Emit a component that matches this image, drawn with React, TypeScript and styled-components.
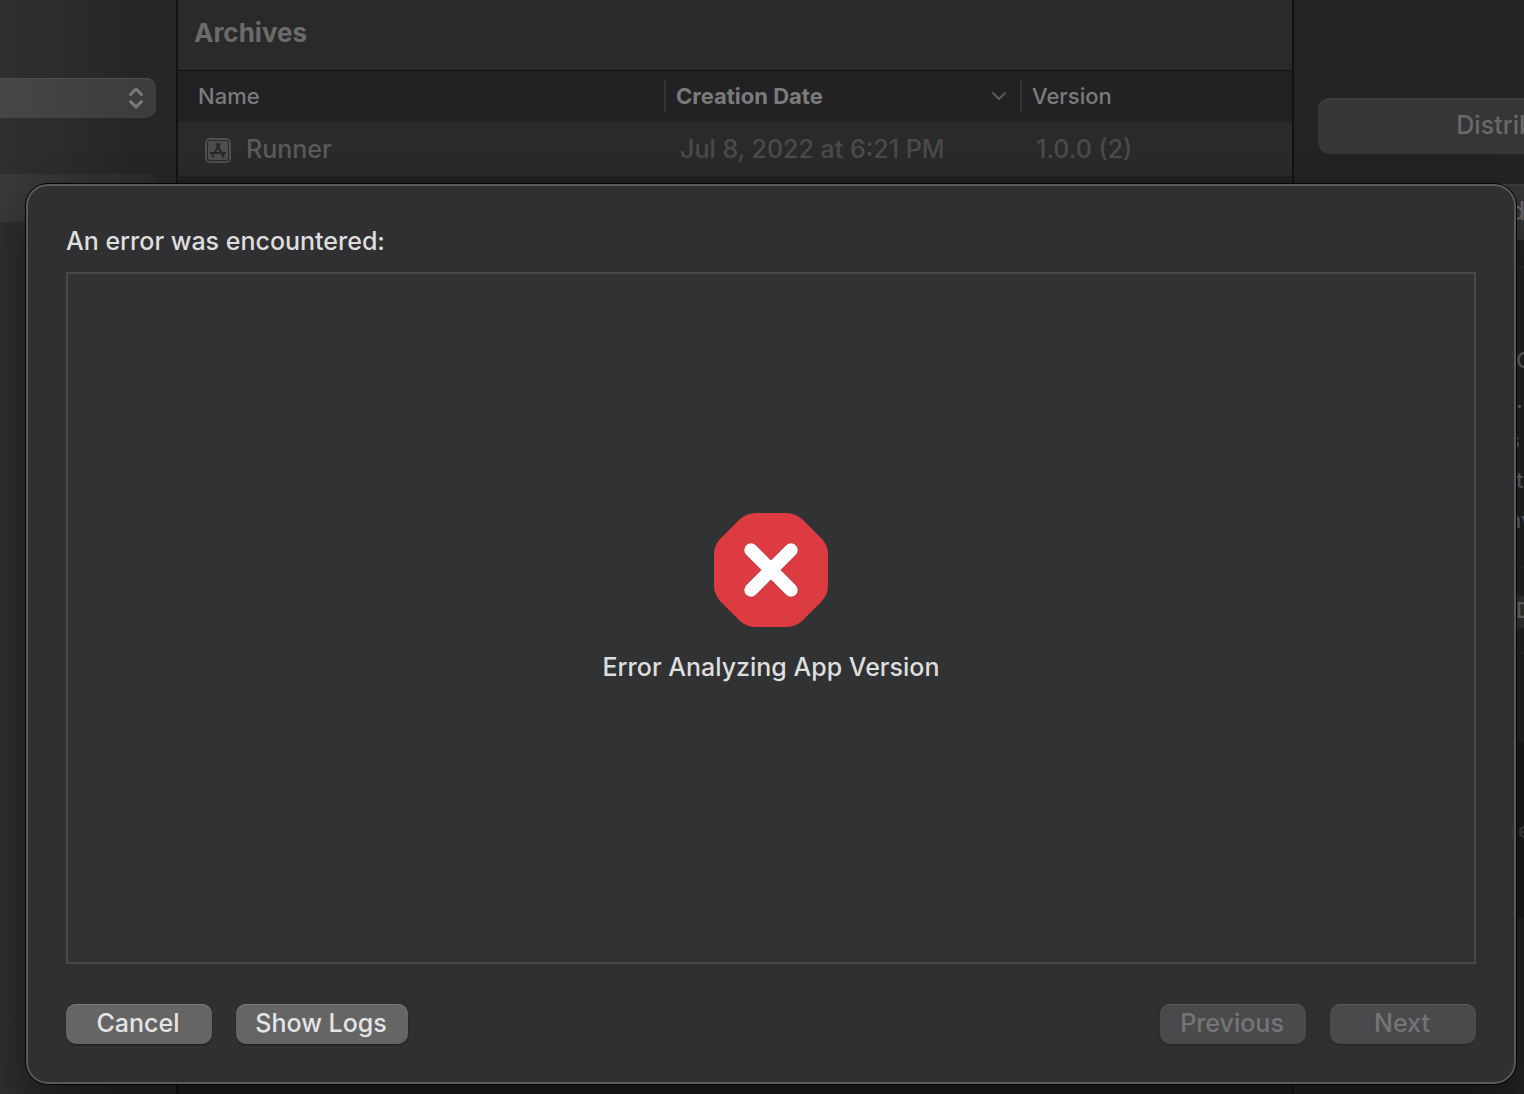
import React from "react";
import styled, { createGlobalStyle } from "styled-components";

const GlobalStyle = createGlobalStyle`
  * { box-sizing: border-box; }
  body {
    margin: 0;
    background: #1f2122;
    font-family: Inter, "Liberation Sans", sans-serif;
    overflow: hidden;
  }
`;

const Window = styled.div`
  position: relative;
  display: grid;
  grid-template-columns: 178px minmax(0, 1fr) 232px;
  min-height: 100vh;
  overflow: hidden;
`;

const Sidebar = styled.aside`
  display: flex;
  flex-direction: column;
  gap: 56px;
  padding: 78px 20px 0 0;
  border-right: 2px solid #111212;
  background: linear-gradient(90deg, #2f2f2f 0%, #2b2b2c 40%, #262628 75%, #262627 100%);
`;

const PopUp = styled.label`
  display: flex;
  align-items: center;
  justify-content: flex-end;
  height: 40px;
  padding-right: 12px;
  border-radius: 0 10px 10px 0;
  background: linear-gradient(90deg, #464646, #3c3c3d);
  box-shadow: inset 0 1px 0 #4f4f4f;
`;

const PopUpSelect = styled.select`
  flex: 1;
  min-width: 0;
  height: 40px;
  border: 0;
  background: transparent;
  color: #7b7b7b;
  appearance: none;
`;

const SidebarItem = styled.div`
  height: 48px;
  border-radius: 0 10px 10px 0;
  background: linear-gradient(90deg, #3a3a3b, #2c2c2d);
`;

const Main = styled.main`
  background: #1f2122;
`;

const MainHeader = styled.header`
  height: 71px;
  padding: 17px 16px 0;
  border-bottom: 1px solid #101011;
  background: #2a2a2a;
`;

const Title = styled.h1`
  margin: 0;
  font-size: 26px;
  line-height: 32px;
  font-weight: 700;
  color: #6b6b6b;
`;

const Table = styled.table`
  width: 100%;
  table-layout: fixed;
  border-collapse: collapse;
  text-align: left;
  white-space: nowrap;
`;

const HeadCell = styled.th<{ $sorted?: boolean }>`
  height: 51px;
  padding: 0 0 2px;
  background: #222224;
  color: #7b7b7c;
  font-size: 22px;
  line-height: 32px;
  font-weight: ${(p) => (p.$sorted ? 700 : 500)};
`;

const HeadLabel = styled.div<{ $first?: boolean }>`
  display: flex;
  align-items: center;
  justify-content: space-between;
  height: 32px;
  padding: 0 14px 0 ${(p) => (p.$first ? 20 : 10)}px;
  border-left: ${(p) => (p.$first ? "0" : "2px solid #343435")};
`;

const Cell = styled.td<{ $name?: boolean }>`
  height: 54px;
  padding: 0 0 0 ${(p) => (p.$name ? 26 : 16)}px;
  background: #2a2a2a;
  color: ${(p) => (p.$name ? "#5a5a5a" : "#4a4a4a")};
  font-size: 25px;
  line-height: 32px;
  font-weight: 500;
`;

const NameLabel = styled.div`
  display: flex;
  align-items: center;
  gap: 14px;
`;

const Inspector = styled.aside`
  display: flex;
  flex-direction: column;
  gap: 30px;
  padding: 98px 0 0 24px;
  border-left: 2px solid #111212;
  background: #212325;
  overflow: hidden;
`;

const InspectorButton = styled.button`
  flex: none;
  width: 448px;
  height: 56px;
  padding: 0 0 2px;
  border: 0;
  border-radius: 12px;
  background: #363638;
  box-shadow: inset 0 2px 0 #3d3d3f;
  color: #69696a;
  font: 500 25px/32px Inter, "Liberation Sans", sans-serif;
`;

const Details = styled.div`
  display: flex;
  flex-direction: column;
  margin-top: -4px;
  font-size: 22px;
  font-weight: 500;
`;

const DetailsGroup = styled.div`
  height: 300px;
  padding-top: 72px;
  border-top: 2px solid #27292a;
`;

const Detail = styled.div<{ $tail?: boolean }>`
  height: 40px;
  padding-left: ${(p) => (p.$tail ? 190 : 198)}px;
  color: #626364;
  line-height: 40px;
  white-space: nowrap;
`;

const FieldGroup = styled.div`
  height: 88px;
  padding: 28px 0 0 194px;
  border-top: 2px solid #27292a;
  border-bottom: 2px solid #27292a;
`;

const Field = styled.div`
  height: 32px;
  padding-left: 4px;
  background: #343536;
  color: #6a6b6c;
  line-height: 28px;
`;

const Notes = styled.div`
  height: 176px;
  margin: 88px 0 0 190px;
  padding: 72px 0 0 10px;
  background: #191a1b;
  color: #3a3b3c;
  line-height: 32px;
`;

const Dialog = styled.section`
  position: absolute;
  inset: 184px 8px 10px 26px;
  display: flex;
  flex-direction: column;
  padding: 36px 38px 38px;
  border: 2px solid #5a5a5b;
  border-radius: 22px;
  background: #303032;
  box-shadow: 0 0 0 1px #050505, 0 24px 50px rgba(0, 0, 0, 0.45);
`;

const DialogTitle = styled.h2`
  margin: 0 0 12px;
  color: #dededf;
  font-size: 25px;
  line-height: 38px;
  font-weight: 500;
`;

const Message = styled.div`
  flex: 1;
  display: flex;
  flex-direction: column;
  align-items: center;
  justify-content: center;
  gap: 24px;
  padding-bottom: 40px;
  border: 2px solid #48494a;
  background: #313234;
  color: #dededf;
  font-size: 25px;
  line-height: 32px;
  font-weight: 500;
`;

const MessageText = styled.p`
  margin: 0;
`;

const Footer = styled.footer`
  display: flex;
  justify-content: space-between;
  margin-top: 40px;
`;

const ButtonGroup = styled.div`
  display: flex;
  gap: 24px;
`;

const PushButton = styled.button<{ $wide?: boolean }>`
  width: ${(p) => (p.$wide ? 172 : 146)}px;
  height: 40px;
  padding: 0 2px 2px 0;
  border: 0;
  border-radius: 10px;
  background: #656565;
  box-shadow: inset 0 1px 0 #7c7c7c, 0 1px 2px rgba(0, 0, 0, 0.4);
  color: #e4e4e4;
  font: 500 25px/32px Inter, "Liberation Sans", sans-serif;

  &:disabled {
    background: #4a4a4c;
    box-shadow: inset 0 1px 0 #59595b, 0 1px 2px rgba(0, 0, 0, 0.25);
    color: #747477;
  }
`;

const UpDownIcon = () => (
  <svg width="16" height="24" viewBox="0 0 16 24" fill="none" stroke="#7b7b7b" strokeWidth="3" strokeLinecap="round" strokeLinejoin="round" aria-hidden="true">
    <path d="M2.500 8.500 8 3l5.500 5.500M2.500 15.500 8 21l5.500-5.500" />
  </svg>
);

const SortIcon = () => (
  <svg width="14" height="12" viewBox="0 0 14 12" fill="none" stroke="#5c5c5d" strokeWidth="2" strokeLinecap="round" strokeLinejoin="round" aria-hidden="true">
    <path d="M1 3 7 9l6-6" />
  </svg>
);

const AppIcon = () => (
  <svg width="28" height="28" viewBox="0 0 28 28" fill="none" aria-hidden="true">
    <rect x="2" y="4" width="24" height="23" rx="4" stroke="#4e4e4e" strokeWidth="2" />
    <rect x="4" y="6" width="20" height="19" rx="2" fill="#4e4e4e" />
    <g stroke="#272727" strokeWidth="2.200" strokeLinecap="round">
      <path d="M15.500 9 10.500 18M12.500 9 19.500 21.500M7 18h8M18.500 18h2.500M8.800 20.600l-.3.600" />
    </g>
  </svg>
);

const ErrorIcon = () => (
  <svg width="114" height="114" viewBox="0 0 114 114" aria-hidden="true">
    <path
      fill="#db3b41"
      d="M42 0H72Q81 0 88 6L108 26Q114 33 114 41V73Q114 81 108 88L88 108Q81 114 72 114H42Q33 114 26 108L6 88Q0 81 0 73V41Q0 33 6 26L26 6Q33 0 42 0Z"
    />
    <path d="M37 37 77 77M77 37 37 77" stroke="#c23238" strokeWidth="14.500" strokeLinecap="round" />
    <path d="M37 37 77 77M77 37 37 77" stroke="#ffffff" strokeWidth="13.500" strokeLinecap="round" />
  </svg>
);

export default function App() {
  return (
    <>
      <GlobalStyle />
      <Window>
        <Sidebar>
          <PopUp>
            <PopUpSelect aria-label="App" />
            <UpDownIcon />
          </PopUp>
          <SidebarItem />
        </Sidebar>

        <Main>
          <MainHeader>
            <Title>Archives</Title>
          </MainHeader>
          <Table>
            <colgroup>
              <col style={{ width: 486 }} />
              <col style={{ width: 356 }} />
              <col />
            </colgroup>
            <thead>
              <tr>
                <HeadCell>
                  <HeadLabel $first>Name</HeadLabel>
                </HeadCell>
                <HeadCell $sorted>
                  <HeadLabel>
                    Creation Date
                    <SortIcon />
                  </HeadLabel>
                </HeadCell>
                <HeadCell>
                  <HeadLabel>Version</HeadLabel>
                </HeadCell>
              </tr>
            </thead>
            <tbody>
              <tr>
                <Cell $name>
                  <NameLabel>
                    <AppIcon />
                    Runner
                  </NameLabel>
                </Cell>
                <Cell>Jul 8, 2022 at 6:21 PM</Cell>
                <Cell>1.0.0 (2)</Cell>
              </tr>
            </tbody>
          </Table>
        </Main>

        <Inspector>
          <InspectorButton>Distribute App</InspectorButton>
          <InspectorButton>Validate App</InspectorButton>
          <Details>
            <DetailsGroup>
              <Detail>C</Detail>
              <Detail>...</Detail>
              <Detail $tail>s</Detail>
              <Detail>t</Detail>
              <Detail $tail>nv</Detail>
            </DetailsGroup>
            <FieldGroup>
              <Field>D</Field>
            </FieldGroup>
            <Notes>e</Notes>
          </Details>
        </Inspector>

        <Dialog role="dialog" aria-labelledby="dialog-title">
          <DialogTitle id="dialog-title">An error was encountered:</DialogTitle>
          <Message>
            <ErrorIcon />
            <MessageText>Error Analyzing App Version</MessageText>
          </Message>
          <Footer>
            <ButtonGroup>
              <PushButton>Cancel</PushButton>
              <PushButton $wide>Show Logs</PushButton>
            </ButtonGroup>
            <ButtonGroup>
              <PushButton disabled>Previous</PushButton>
              <PushButton disabled>Next</PushButton>
            </ButtonGroup>
          </Footer>
        </Dialog>
      </Window>
    </>
  );
}
